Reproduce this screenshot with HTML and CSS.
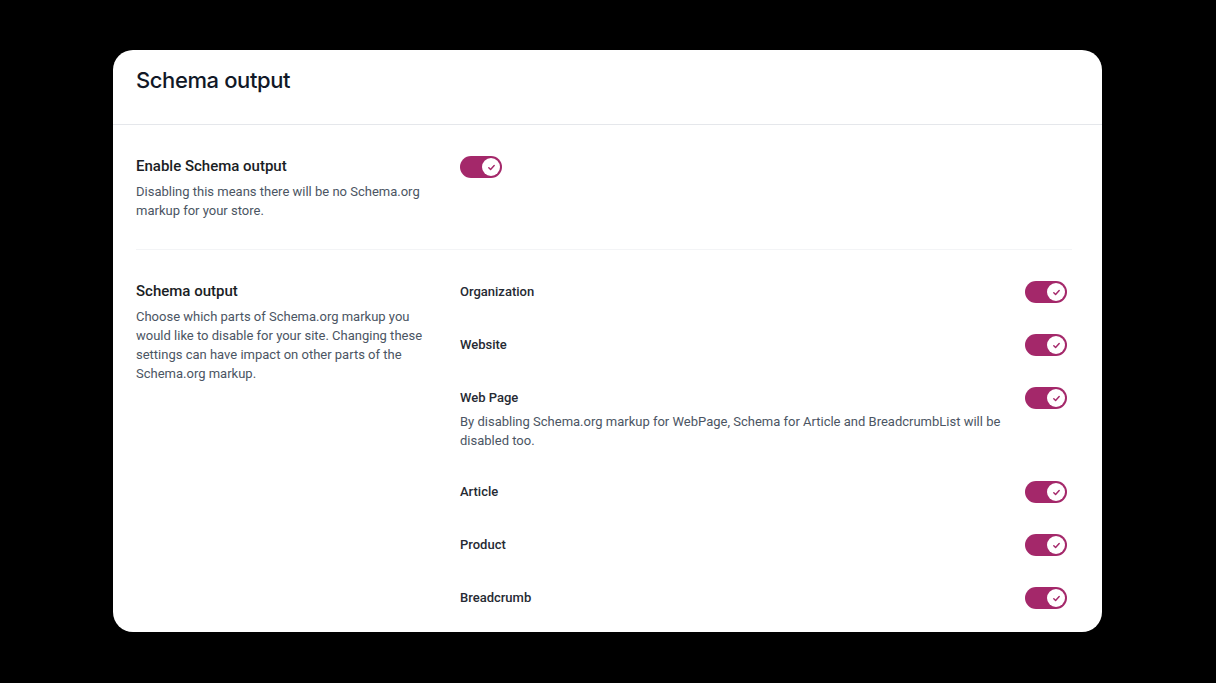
FILE: index.html
```html
<!DOCTYPE html>
<html lang="en">
<head>
    <meta charset="UTF-8">
    <meta name="viewport" content="width=device-width, initial-scale=1.0">
    <title>Schema output</title>
    <link rel="stylesheet" href="styles.css">
</head>
<body>
    <div class="card">
        <div class="card-header">
            <h1 class="card-title">Schema output</h1>
        </div>

        <div class="card-body">
            <div class="section divided">
                <div class="section-info">
                    <div class="section-title">Enable Schema output</div>
                    <div class="section-desc">Disabling this means there will be no Schema.org markup for your store.</div>
                </div>
                <div class="section-controls">
                    <div class="toggle-only">
                        <span class="toggle"><span class="knob"><svg viewBox="0 0 10 10" width="9" height="9"><path d="M2 5.2l2 2 4-4.4" fill="none" stroke="#a4286a" stroke-width="1.6" stroke-linecap="round" stroke-linejoin="round"/></svg></span></span>
                    </div>
                </div>
            </div>

            <div class="section">
                <div class="section-info">
                    <div class="section-title">Schema output</div>
                    <div class="section-desc">Choose which parts of Schema.org markup you would like to disable for your site. Changing these settings can have impact on other parts of the Schema.org markup.</div>
                </div>
                <div class="section-controls">
                    <div class="row">
                        <div class="row-text"><div class="row-label">Organization</div></div>
                        <span class="toggle"><span class="knob"><svg viewBox="0 0 10 10" width="9" height="9"><path d="M2 5.2l2 2 4-4.4" fill="none" stroke="#a4286a" stroke-width="1.6" stroke-linecap="round" stroke-linejoin="round"/></svg></span></span>
                    </div>
                    <div class="row">
                        <div class="row-text"><div class="row-label">Website</div></div>
                        <span class="toggle"><span class="knob"><svg viewBox="0 0 10 10" width="9" height="9"><path d="M2 5.2l2 2 4-4.4" fill="none" stroke="#a4286a" stroke-width="1.6" stroke-linecap="round" stroke-linejoin="round"/></svg></span></span>
                    </div>
                    <div class="row">
                        <div class="row-text">
                            <div class="row-label">Web Page</div>
                            <div class="row-desc">By disabling Schema.org markup for WebPage, Schema for Article and BreadcrumbList will be disabled too.</div>
                        </div>
                        <span class="toggle"><span class="knob"><svg viewBox="0 0 10 10" width="9" height="9"><path d="M2 5.2l2 2 4-4.4" fill="none" stroke="#a4286a" stroke-width="1.6" stroke-linecap="round" stroke-linejoin="round"/></svg></span></span>
                    </div>
                    <div class="row">
                        <div class="row-text"><div class="row-label">Article</div></div>
                        <span class="toggle"><span class="knob"><svg viewBox="0 0 10 10" width="9" height="9"><path d="M2 5.2l2 2 4-4.4" fill="none" stroke="#a4286a" stroke-width="1.6" stroke-linecap="round" stroke-linejoin="round"/></svg></span></span>
                    </div>
                    <div class="row">
                        <div class="row-text"><div class="row-label">Product</div></div>
                        <span class="toggle"><span class="knob"><svg viewBox="0 0 10 10" width="9" height="9"><path d="M2 5.2l2 2 4-4.4" fill="none" stroke="#a4286a" stroke-width="1.6" stroke-linecap="round" stroke-linejoin="round"/></svg></span></span>
                    </div>
                    <div class="row">
                        <div class="row-text"><div class="row-label">Breadcrumb</div></div>
                        <span class="toggle"><span class="knob"><svg viewBox="0 0 10 10" width="9" height="9"><path d="M2 5.2l2 2 4-4.4" fill="none" stroke="#a4286a" stroke-width="1.6" stroke-linecap="round" stroke-linejoin="round"/></svg></span></span>
                    </div>
                </div>
            </div>
        </div>
    </div>
</body>
</html>
```

FILE: styles.css
```css
body {
    margin: 0;
    padding: 50px 0 0 113px;
    background-color: #000;
    font-family: Roboto, "Noto Sans", sans-serif;
    color: #1e1e1e;
}

.card {
    width: 989px;
    background-color: #fff;
    border-radius: 20px;
    overflow: hidden;
}

.card-header {
    padding: 15px 23px 29px;
    border-bottom: 1px solid #e5e7eb;
}

.card-title {
    margin: 0;
    font-family: Inter, Roboto, sans-serif;
    font-size: 22px;
    line-height: 30px;
    font-weight: 500;
    letter-spacing: -0.4px;
    color: #111827;
}

.card-body {
    padding: 0 30px 23px 23px;
}

.section {
    display: grid;
    grid-template-columns: 290px 1fr;
    gap: 34px;
    padding: 30px 5px 29px 0;
}

.section.divided {
    border-bottom: 1px solid #f3f4f6;
}

.section + .section {
    padding-bottom: 0;
}

.section-title {
    font-size: 15px;
    line-height: 22px;
    font-weight: 500;
    color: #1a1d24;
    margin-bottom: 6px;
}

.section-desc {
    font-size: 13px;
    line-height: 18.7px;
    color: #4b5563;
}

.section-controls {
    display: flex;
    flex-direction: column;
    gap: 31px;
    padding-top: 1px;
}

.row {
    display: flex;
    align-items: flex-start;
    justify-content: space-between;
}

.row-text {
    max-width: 545px;
}

.row-label {
    font-size: 13px;
    line-height: 22px;
    font-weight: 500;
    color: #262a33;
}

.row-desc {
    margin-top: 4px;
    font-size: 13px;
    line-height: 18.5px;
    color: #4b5563;
}

.toggle {
    display: flex;
    align-items: center;
    justify-content: flex-end;
    width: 42px;
    height: 22px;
    padding: 0 2px;
    box-sizing: border-box;
    border-radius: 11px;
    background-color: #a4286a;
    flex-shrink: 0;
}

.knob {
    display: flex;
    align-items: center;
    justify-content: center;
    width: 18px;
    height: 18px;
    border-radius: 50%;
    background-color: #fff;
}
```
